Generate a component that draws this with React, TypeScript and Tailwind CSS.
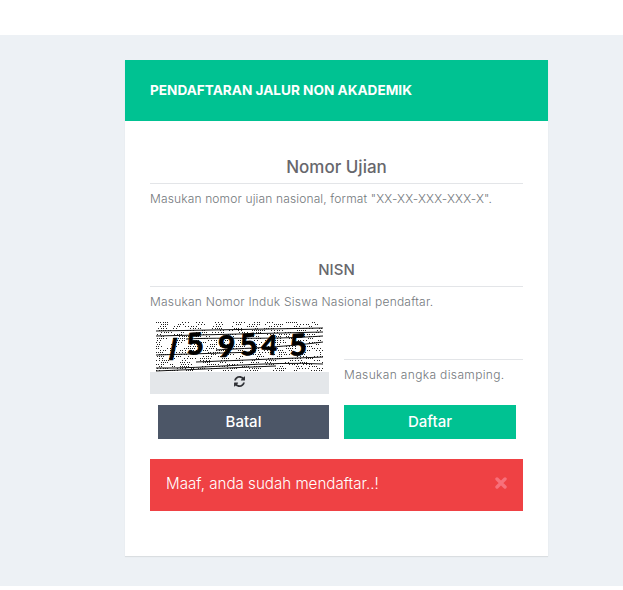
import React from 'react';

const FONT = "font-['Inter','Noto_Sans',sans-serif]";

// deterministic noise for the captcha picture: dotted runs on every other row
const noise: { x: number; y: number }[] = [];
let seed = 7;
const next = () => {
  seed = (seed * 16807) % 2147483647;
  return seed / 2147483647;
};
for (let y = 0; y < 50; y += 2) {
  let x = Math.floor(next() * 6);
  while (x < 167) {
    const run = 3 + Math.floor(next() * 11);
    for (let i = 0; i < run && x + i < 167; i += next() > 0.6 ? 3 : 2) {
      noise.push({ x: x + i, y });
    }
    x += run + 4 + Math.floor(next() * 12);
  }
}

const lines = [
  'M0 9 L167 6',
  'M0 14 L167 10',
  'M30 17 C70 15 110 18 167 14',
  'M60 28 C90 26 120 26 167 20',
  'M0 33 L100 30',
  'M40 40 L167 35',
  'M0 46 C50 47 110 39 167 42',
  'M0 49 L120 44',
];

const digits = [
  { c: '/', x: 13, y: 38, r: 0, s: 30, f: "'Liberation Sans', sans-serif" },
  { c: '5', x: 31, y: 33, r: -4, s: 30, f: "'Lato', sans-serif" },
  { c: '9', x: 62, y: 35, r: 0, s: 30, f: "'Lato', sans-serif" },
  { c: '5', x: 85, y: 34, r: -6, s: 30, f: "'Lato', sans-serif" },
  { c: '4', x: 105, y: 32, r: 4, s: 27, f: "'Lato', sans-serif" },
  { c: '5', x: 134, y: 34, r: -3, s: 30, f: "'Lato', sans-serif" },
];

function Captcha() {
  return (
    <svg width="167" height="50" viewBox="0 0 167 50" className="block">
      <rect width="167" height="50" fill="#fff" />
      {noise.map((p, i) => (
        <rect key={i} x={p.x} y={p.y} width="1" height="1" fill="#222" />
      ))}
      {lines.map((d) => (
        <path key={d} d={d} fill="none" stroke="#111" strokeWidth="1" />
      ))}
      {digits.map((d, i) => (
        <text
          key={i}
          x={d.x}
          y={d.y}
          fontSize={d.s}
          fontWeight="900"
          fontFamily={d.f}
          fill="#000"
          stroke="#000"
          strokeWidth="0.6"
          transform={`rotate(${d.r} ${d.x} ${d.y})`}
        >
          {d.c}
        </text>
      ))}
    </svg>
  );
}

function RefreshIcon() {
  return (
    <svg width="11" height="11" viewBox="0 0 1536 1536" fill="#2f3136" className="mb-[3px]">
      <path d="M1511 928c0 3 0 6-1 8-85 354-375 600-743 600-194 0-383-77-524-210L114 1455c-12 12-29 20-45 20-35 0-64-29-64-64V963c0-35 29-64 64-64h448c35 0 64 29 64 64 0 17-8 33-20 45l-137 137c94 88 219 138 348 138 178 0 343-92 436-244 24-38 36-75 53-114 5-14 15-23 30-23h192c18 0 32 15 32 32zm25-800v448c0 35-29 64-64 64h-448c-35 0-64-29-64-64 0-17 8-33 20-45l138-138c-95-88-220-137-349-137-178 0-343 92-436 244-24 38-36 75-53 114-5 14-15 23-30 23H51c-18 0-32-15-32-32v-8C105 242 398 0 768 0c196 0 387 77 530 210l130-129c12-12 29-20 45-20 35 0 64 29 64 64z" />
    </svg>
  );
}

export default function App() {
  return (
    <div className={`${FONT} bg-white pt-[35px] pb-[4px]`}>
      <div className="bg-[#edf1f5] pt-[25px] pb-[30px] pl-[125px] pr-[75px]">
        <div className="bg-white shadow-[0_1px_1px_rgba(0,0,0,0.08)]">
          <div className="h-[61px] bg-[#00c292] px-[25px] flex items-center">
            <h1 className="text-white text-[13.6px] font-bold tracking-[0px] mb-[1px]">PENDAFTARAN JALUR NON AKADEMIK</h1>
          </div>

          <div className="px-[25px] pt-[31px] pb-[45px]">
            <div>
              <h2 className="text-center text-[#67676c] text-[17px] font-medium leading-[30px] h-[31px] border-b border-[#e3e5e8] box-content">
                Nomor Ujian
              </h2>
              <p className="mt-[6px] text-[#73787c] text-[12px] font-light leading-[18px] tracking-[0.14px]">
                Masukan nomor ujian nasional, format "XX-XX-XXX-XXX-X".
              </p>
            </div>

            <div className="mt-[47px]">
              <h2 className="text-center text-[#67676c] text-[15px] font-medium leading-[30px] h-[31px] border-b border-[#e3e5e8] box-content">
                NISN
              </h2>
              <p className="mt-[6px] text-[#73787c] text-[12px] font-light leading-[18px] tracking-[0.21px]">
                Masukan Nomor Induk Siswa Nasional pendaftar.
              </p>
            </div>

            <div className="mt-[11px] flex gap-[15px]">
              <div className="w-[179px]">
                <div className="pl-[6px]">
                  <Captcha />
                </div>
                <div className="h-[22px] bg-[#e4e7ea] flex items-center justify-center">
                  <RefreshIcon />
                </div>
              </div>
              <div className="w-[179px] pt-[37px]">
                <div className="border-b border-[#e3e5e8]" />
                <p className="mt-[6px] text-[#73787c] text-[12px] font-light leading-[18px] tracking-[0.35px]">
                  Masukan angka disamping.
                </p>
              </div>
            </div>

            <div className="mt-[11px] flex gap-[15px]">
              <button className="ml-[8px] w-[171px] h-[34px] bg-[#4c5667] text-white text-[15px] font-medium">Batal</button>
              <button className="w-[172px] h-[34px] bg-[#00c292] text-white text-[15px] font-medium">Daftar</button>
            </div>

            <div className="mt-[20px] h-[52px] bg-[#ef4144] pl-[16px] pr-[16px] flex items-center justify-between">
              <span className="text-white text-[15.15px] font-light mb-[1px]">Maaf, anda sudah mendaftar..!</span>
              <svg width="12" height="12" viewBox="0 0 12 12" className="mb-[5px]">
                <path d="M2 2 L10 10 M10 2 L2 10" stroke="#f7707a" strokeWidth="3.4" strokeLinecap="round" />
              </svg>
            </div>
          </div>
        </div>
      </div>
    </div>
  );
}
